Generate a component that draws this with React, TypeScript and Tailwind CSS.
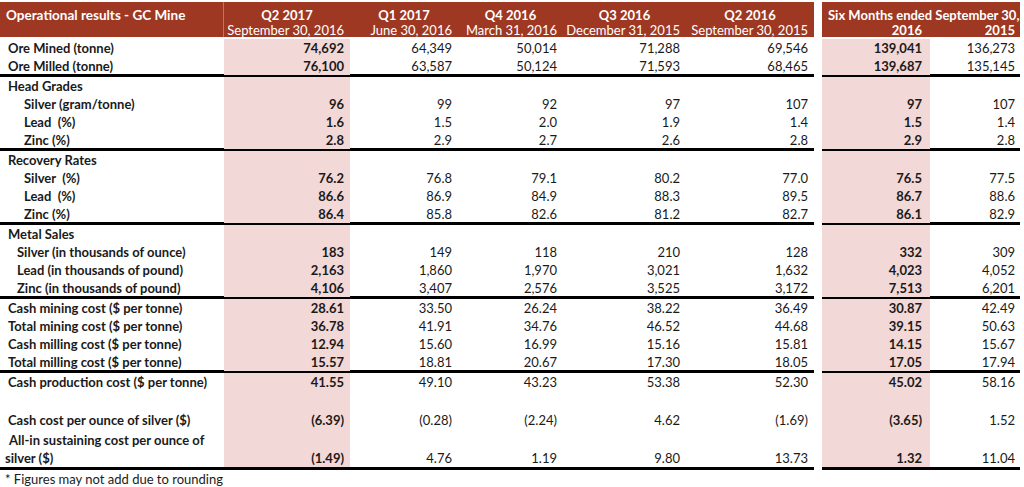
type Row = {
  label: string;
  pad: string;
  vals?: string[];
  border?: boolean;
  tall?: boolean;
  label2?: string;
  h?: string;
};

const rows: Row[] = [
  { label: "Ore Mined (tonne)", pad: "pl-[8px]", vals: ["74,692", "64,349", "50,014", "71,288", "69,546", "139,041", "136,273"] },
  { label: "Ore Milled (tonne)", pad: "pl-[8px]", vals: ["76,100", "63,587", "50,124", "71,593", "68,465", "139,687", "135,145"], border: true },
  { label: "Head Grades", pad: "pl-[8px]" },
  { label: "Silver (gram/tonne)", pad: "pl-[24px]", vals: ["96", "99", "92", "97", "107", "97", "107"] },
  { label: "Lead  (%)", pad: "pl-[24px]", vals: ["1.6", "1.5", "2.0", "1.9", "1.4", "1.5", "1.4"] },
  { label: "Zinc (%)", pad: "pl-[24px]", vals: ["2.8", "2.9", "2.7", "2.6", "2.8", "2.9", "2.8"], border: true },
  { label: "Recovery Rates", pad: "pl-[8px]" },
  { label: "Silver  (%)", pad: "pl-[24px]", vals: ["76.2", "76.8", "79.1", "80.2", "77.0", "76.5", "77.5"] },
  { label: "Lead  (%)", pad: "pl-[24px]", vals: ["86.6", "86.9", "84.9", "88.3", "89.5", "86.7", "88.6"] },
  { label: "Zinc (%)", pad: "pl-[24px]", vals: ["86.4", "85.8", "82.6", "81.2", "82.7", "86.1", "82.9"], border: true },
  { label: "Metal Sales", pad: "pl-[8px]" },
  { label: "Silver (in thousands of ounce)", pad: "pl-[17px]", vals: ["183", "149", "118", "210", "128", "332", "309"] },
  { label: "Lead (in thousands of pound)", pad: "pl-[17px]", vals: ["2,163", "1,860", "1,970", "3,021", "1,632", "4,023", "4,052"] },
  { label: "Zinc (in thousands of pound)", pad: "pl-[17px]", vals: ["4,106", "3,407", "2,576", "3,525", "3,172", "7,513", "6,201"], border: true },
  { label: "Cash mining cost ($ per tonne)", pad: "pl-[8px]", vals: ["28.61", "33.50", "26.24", "38.22", "36.49", "30.87", "42.49"] },
  { label: "Total mining cost ($ per tonne)", pad: "pl-[8px]", vals: ["36.78", "41.91", "34.76", "46.52", "44.68", "39.15", "50.63"] },
  { label: "Cash milling cost ($ per tonne)", pad: "pl-[8px]", vals: ["12.94", "15.60", "16.99", "15.16", "15.81", "14.15", "15.67"] },
  { label: "Total milling cost ($ per tonne)", pad: "pl-[8px]", vals: ["15.57", "18.81", "20.67", "17.30", "18.05", "17.05", "17.94"], border: true },
  { label: "Cash production cost ($ per tonne)", pad: "pl-[8px]", vals: ["41.55", "49.10", "43.23", "53.38", "52.30", "45.02", "58.16"] },
  { label: "", pad: "pl-[8px]", h: "h-[20px]" },
  { label: "Cash cost per ounce of silver ($)", pad: "pl-[8px]", vals: ["(6.39)", "(0.28)", "(2.24)", "4.62", "(1.69)", "(3.65)", "1.52"], h: "h-[20px]" },
  { label: "All-in sustaining cost per ounce of", label2: "silver ($)", pad: "pl-[9px]", vals: ["(1.49)", "4.76", "1.19", "9.80", "13.73", "1.32", "11.04"], border: true, tall: true },
];

const leftCols = "grid grid-cols-[224px_126px_108px_105px_123px_128px]";
const rightCols = "grid grid-cols-[108px_90px]";
const pink = "bg-[#f2d8d6]";

function DataRow({ r }: { r: Row }) {
  const h = r.tall ? "h-[39px]" : r.border ? "h-[20px]" : r.h ?? "h-[18px]";
  const line = r.border ? "border-b-[3px] border-black" : "";
  const v = r.vals ?? ["", "", "", "", "", "", ""];
  const top = r.tall ? "pt-[18px]" : "";
  return (
    <div className="flex leading-[18px]">
      <div className={`${leftCols} w-[814px] ${h} ${line}`}>
        {r.tall ? (
          <div className="flex flex-col font-bold">
            <span className={r.pad}>{r.label}</span>
            <span className="pl-[5px]">{r.label2}</span>
          </div>
        ) : (
          <div className={`${r.pad} font-bold whitespace-pre`}>{r.label}</div>
        )}
        {v.slice(0, 5).map((x, i) => (
          <div key={i} className={`${top} text-right pr-[6px] ${i === 0 ? `${pink} font-bold` : ""}`}>
            {x}
          </div>
        ))}
      </div>
      <div className={`${rightCols} ml-[8px] w-[198px] ${h} ${line}`}>
        <div className={`${top} text-right pr-[8px] font-bold ${pink}`}>{v[5]}</div>
        <div className={`${top} text-right pr-[5px]`}>{v[6]}</div>
      </div>
    </div>
  );
}

export default function App() {
  const quarters = [
    ["Q2 2017", "September 30, 2016"],
    ["Q1 2017", "June 30, 2016"],
    ["Q4 2016", "March 31, 2016"],
    ["Q3 2016", "December 31, 2015"],
    ["Q2 2016", "September 30, 2015"],
  ];
  return (
    <div className="w-[1024px] h-[487px] bg-white pt-[2px] text-[13px] text-[#1a1a1a] leading-none font-['Lato',sans-serif] overflow-hidden">
      {/* header */}
      <div className="flex text-white">
        <div className={`${leftCols} w-[814px] h-[35px] bg-[#9e3822]`}>
          <div className="border-r border-[#c4735f] pl-[6px] pt-[7px] text-[13.5px] font-bold">Operational results - GC Mine</div>
          {quarters.map(([q, d]) => (
            <div key={q} className="flex flex-col">
              <div className="h-[18px] pt-[7px] text-center font-bold">{q}</div>
              <div className="pt-[4px] pr-[6px] text-right whitespace-nowrap">{d}</div>
            </div>
          ))}
        </div>
        <div className="ml-[8px] w-[198px] h-[35px] bg-[#9e3822] flex flex-col">
          <div className="h-[18px] pt-[7px] pl-[6px] font-bold whitespace-nowrap">Six Months ended September 30,</div>
          <div className={`${rightCols} pt-[4px] font-bold`}>
            <div className="pr-[8px] text-right">2016</div>
            <div className="pr-[5px] text-right">2015</div>
          </div>
        </div>
      </div>
      <div className="pt-[2px]">
        {rows.map((r, i) => (
          <DataRow key={i} r={r} />
        ))}
      </div>
      <div className="pl-[5px] leading-[18px]">* Figures may not add due to rounding</div>
    </div>
  );
}
